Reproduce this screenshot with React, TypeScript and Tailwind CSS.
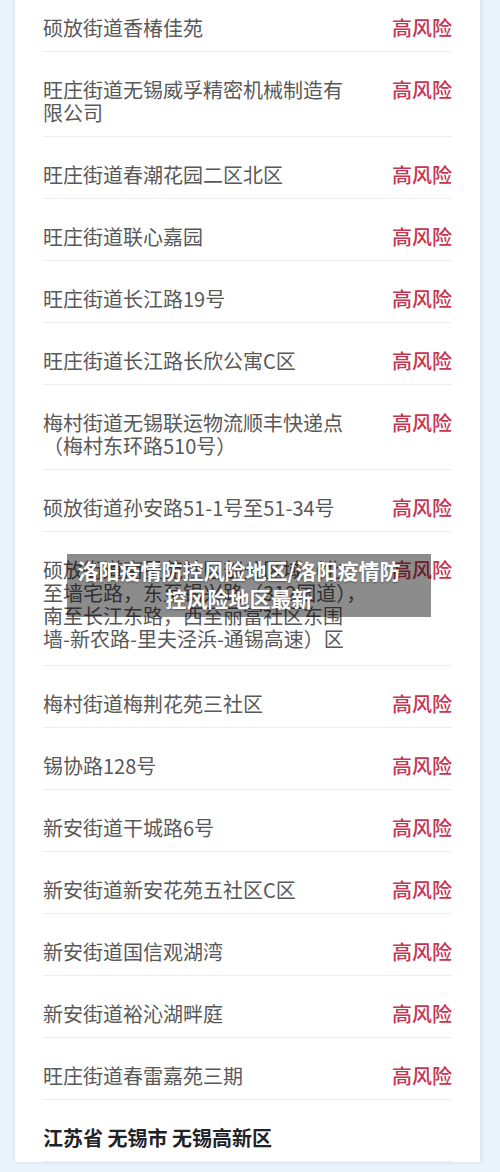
const rows: { lines: string[]; extra?: boolean }[] = [
  { lines: ["硕放街道香椿佳苑"] },
  { lines: ["旺庄街道无锡威孚精密机械制造有", "限公司"] },
  { lines: ["旺庄街道春潮花园二区北区"] },
  { lines: ["旺庄街道联心嘉园"] },
  { lines: ["旺庄街道长江路19号"] },
  { lines: ["旺庄街道长江路长欣公寓C区"] },
  { lines: ["梅村街道无锡联运物流顺丰快递点", "（梅村东环路510号）"] },
  { lines: ["硕放街道孙安路51-1号至51-34号"] },
  {
    lines: [
      "硕放街道南星苑社区部分区域（北",
      "至墙宅路，东至锡兴路（312国道），",
      "南至长江东路，西至丽富社区东围",
      "墙-新农路-里夫泾浜-通锡高速）区",
    ],
    extra: true,
  },
  { lines: ["梅村街道梅荆花苑三社区"] },
  { lines: ["锡协路128号"] },
  { lines: ["新安街道干城路6号"] },
  { lines: ["新安街道新安花苑五社区C区"] },
  { lines: ["新安街道国信观湖湾"] },
  { lines: ["新安街道裕沁湖畔庭"] },
  { lines: ["旺庄街道春雷嘉苑三期"] },
];

const RiskRow = ({ lines, extra }: { lines: string[]; extra?: boolean }) => (
  <div
    className={
      "flex items-start justify-between border-b border-[#eeeeee] pt-[26px] " +
      (extra ? "pb-[15px]" : "pb-[12px]")
    }
  >
    <div className="w-[315px] text-[20px] leading-[23px] text-[#585858]">
      {lines.map((l) => (
        <div key={l} className="whitespace-nowrap">
          {l}
        </div>
      ))}
    </div>
    <div className="text-[20px] leading-[23px] font-medium text-[#c7354f]">高风险</div>
  </div>
);

export default function App() {
  return (
    <div
      className="relative h-[1172px] overflow-hidden bg-[#e9f3fb] px-[15px] pr-[20px]"
      style={{ fontFamily: '"Noto Sans CJK SC", "Noto Sans", sans-serif' }}
    >
      <div className="h-full bg-white px-[28px] shadow-[1px_0_4px_rgba(150,190,225,0.35)]">
        <div className="-mt-[10px]">
          {rows.map((r, i) => (
            <RiskRow key={i} lines={r.lines} extra={r.extra} />
          ))}
          <div className="border-b border-[#eeeeee] pt-[26px] pb-[12px] text-[20px] leading-[23px] font-bold text-[#1f2328]">
            江苏省 无锡市 无锡高新区
          </div>
        </div>
      </div>

      {/* caption overlay */}
      <div className="absolute left-[67px] top-[554px] h-[63px] w-[364px] bg-black/45 pt-[2px] pr-[20px]">
        <div className="text-center text-[21px] leading-[28px] font-bold text-white [text-shadow:0_1px_2px_rgba(0,0,0,0.4)]">
          <div className="whitespace-nowrap">洛阳疫情防控风险地区/洛阳疫情防</div>
          <div>控风险地区最新</div>
        </div>
      </div>
    </div>
  );
}
